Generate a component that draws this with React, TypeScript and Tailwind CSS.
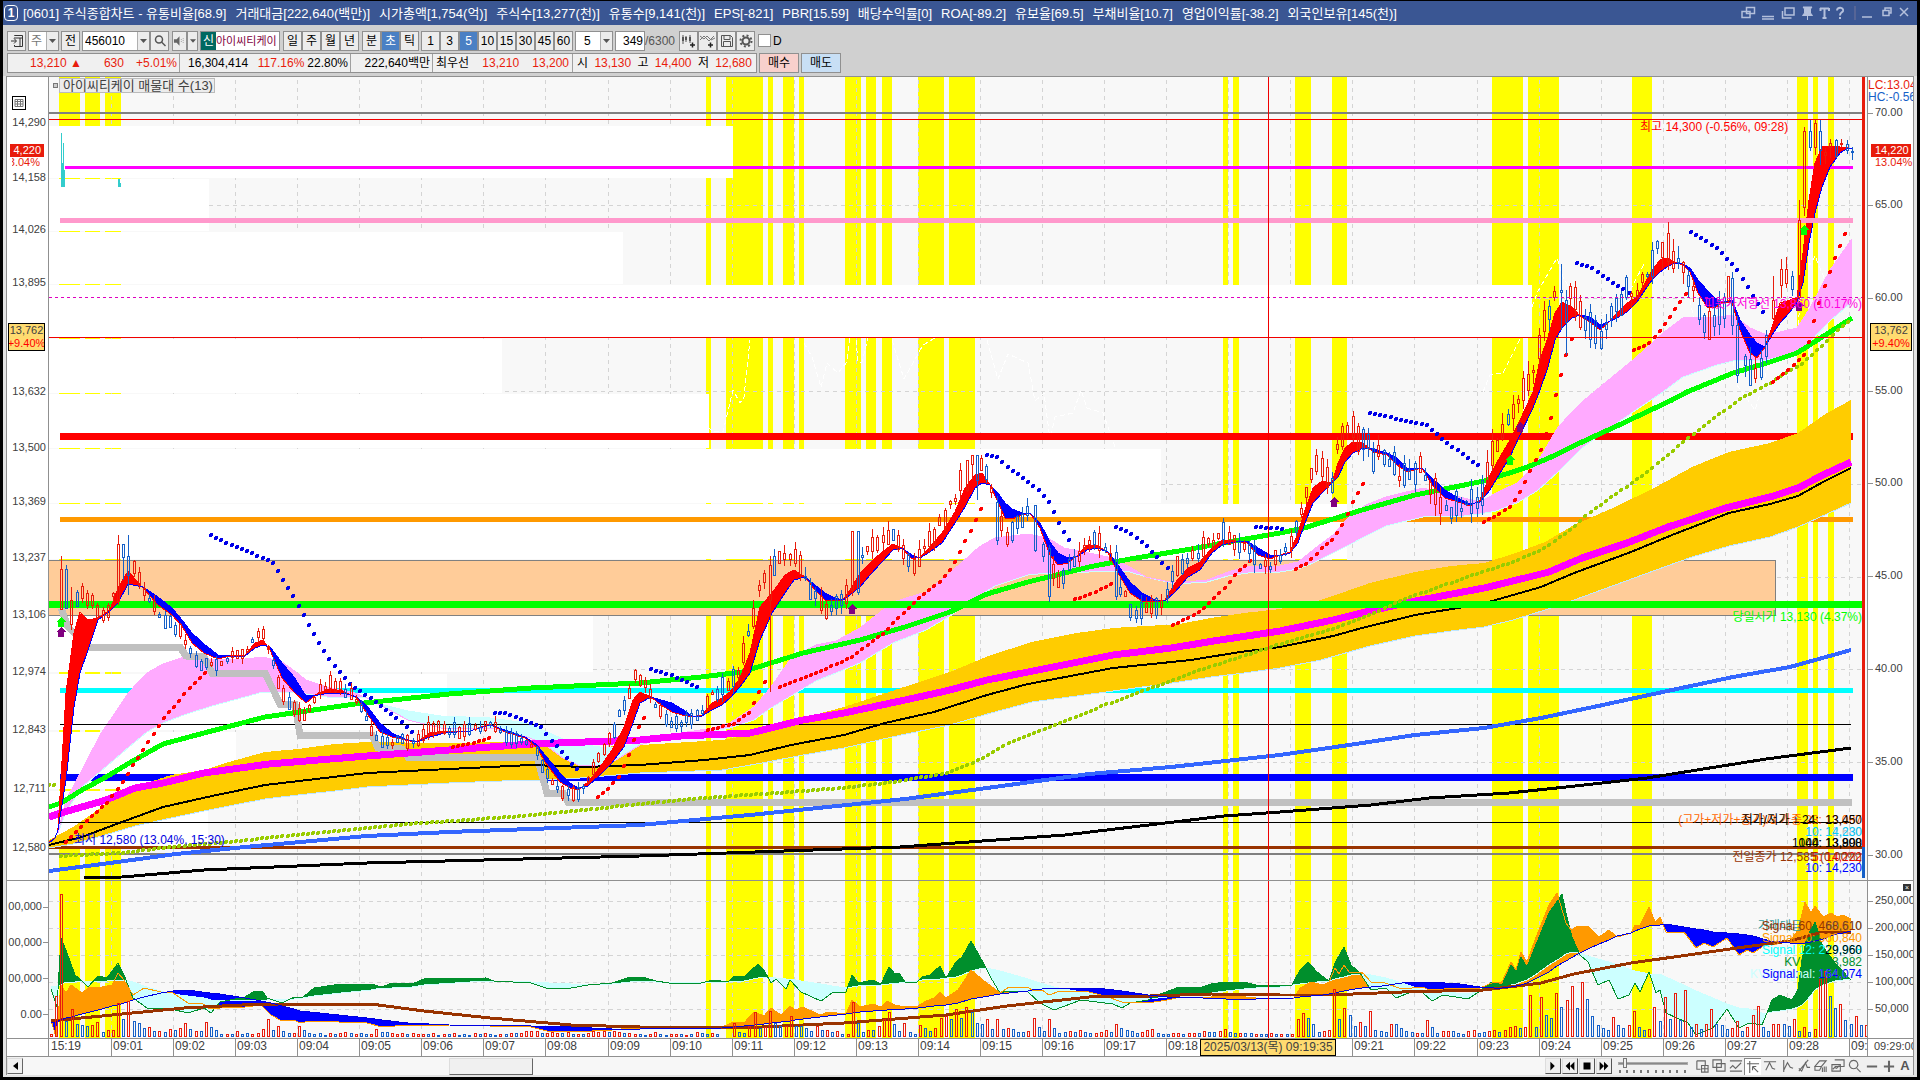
import type { ReactNode } from "react";

const UP = "#e81c0c";
const DOWN = "#1560c8";

// plot coordinates: x 49..1867, main pane y 77..880, volume pane y 881..1038
const LEFT = 49;
const WIDTH = 1818;
const MAIN = { top: 77, height: 803 };
const SUB = { top: 881, height: 157 };

const leftPct = (x: number) => `${((x - LEFT) / WIDTH) * 100}%`;
const topPct = (y: number, pane: { top: number; height: number }) => `${((y - pane.top) / pane.height) * 100}%`;

const titleItems = [
  "[0601] 주식종합차트 - 유통비율[68.9]", "거래대금[222,640(백만)]", "시가총액[1,754(억)]", "주식수[13,277(천)]",
  "유통수[9,141(천)]", "EPS[-821]", "PBR[15.59]", "배당수익률[0]", "ROA[-89.2]", "유보율[69.5]", "부채비율[10.7]",
  "영업이익률[-38.2]", "외국인보유[145(천)]",
];

const bands = [
  [59, 80], [85, 100], [105, 121], [706, 711], [726, 763], [768, 773], [783, 794], [799, 804], [845, 861], [866, 876],
  [882, 892], [918, 944], [949, 975], [1223, 1228], [1233, 1239], [1295, 1311], [1332, 1347], [1492, 1523],
  [1528, 1559], [1632, 1652], [1797, 1808], [1813, 1818], [1828, 1834],
];

// volume profile: top, bottom, right edge
const profile = [
  [126, 178, 733], [179, 231, 209], [232, 284, 623], [285, 337, 1532], [339, 393, 502], [394, 448, 709],
  [449, 503, 1161], [504, 559, 1347], [616, 672, 593], [674, 730, 447], [732, 789, 236], [791, 847, 208],
];

const minuteLines = Array.from({ length: 29 }, (_, i) => Math.round(111 + i * 62.07));

// x, fast average, slow average
const maRibbon = [
  49, 842, 843, 55, 838, 838, 58, 830, 830, 66, 693, 780, 74, 633, 707, 80, 612, 673, 88, 620, 650, 98, 618, 620, 110, 610, 611, 118, 588, 603,
  128, 571, 584, 143, 588, 587, 158, 605, 597, 172, 615, 608, 182, 626, 620, 192, 643, 633, 204, 653, 644, 218, 659, 655,
  230, 656, 656, 245, 655, 656, 255, 643, 648, 263, 640, 645, 270, 650, 647, 282, 678, 663, 294, 692, 677, 306, 703, 696,
  318, 693, 695, 330, 689, 693, 343, 691, 693, 357, 698, 697, 368, 715, 707, 380, 732, 723, 392, 737, 733, 405, 740, 739,
  416, 742, 742, 430, 733, 737, 445, 731, 733, 470, 731, 731, 490, 724, 725, 505, 732, 730, 525, 738, 737, 537, 747, 745,
  545, 762, 755, 560, 782, 773, 570, 788, 783, 578, 790, 788, 588, 782, 786, 600, 767, 775, 612, 750, 763, 624, 727, 747,
  633, 700, 723, 640, 692, 703, 651, 697, 697, 661, 705, 700, 672, 712, 703, 682, 715, 709, 692, 717, 716, 702, 715, 716,
  712, 703, 710, 722, 698, 705, 730, 692, 698, 740, 678, 687, 750, 653, 673, 760, 607, 640, 772, 593, 613, 785, 575, 593,
  794, 570, 580, 805, 577, 577, 815, 590, 585, 825, 600, 593, 835, 601, 598, 843, 600, 600, 850, 590, 595, 860, 573, 587,
  870, 563, 575, 882, 552, 562, 893, 544, 550, 902, 548, 548, 912, 559, 555, 920, 557, 558, 930, 547, 552, 942, 533, 543,
  955, 512, 523, 965, 488, 507, 975, 475, 488, 982, 473, 483, 990, 485, 485, 998, 502, 493, 1005, 518, 503, 1012, 519, 509,
  1022, 515, 513, 1030, 513, 513, 1040, 528, 523, 1050, 555, 542, 1058, 565, 553, 1068, 563, 558, 1078, 555, 556,
  1087, 545, 550, 1097, 545, 548, 1108, 553, 552, 1118, 573, 565, 1130, 593, 582, 1142, 601, 593, 1155, 602, 600,
  1165, 600, 601, 1175, 583, 592, 1188, 568, 577, 1200, 562, 570, 1212, 548, 553, 1222, 540, 545, 1235, 541, 542,
  1247, 543, 541, 1258, 555, 548, 1270, 559, 555, 1280, 555, 556, 1290, 552, 553, 1298, 533, 543, 1305, 510, 523,
  1313, 488, 503, 1322, 481, 493, 1332, 483, 483, 1338, 463, 477, 1345, 448, 462, 1353, 442, 453, 1363, 443, 448,
  1373, 452, 449, 1387, 455, 453, 1397, 465, 458, 1407, 472, 468, 1422, 468, 468, 1432, 485, 478, 1445, 498, 490,
  1458, 502, 498, 1470, 506, 504, 1480, 500, 502, 1490, 475, 490, 1500, 457, 473, 1510, 440, 457, 1520, 420, 435,
  1533, 392, 408, 1540, 360, 390, 1548, 337, 367, 1555, 313, 340, 1562, 302, 328, 1572, 307, 318, 1580, 316, 315,
  1590, 322, 317, 1600, 330, 325, 1608, 323, 322, 1617, 313, 318, 1627, 303, 312, 1637, 297, 302, 1645, 283, 290,
  1652, 270, 280, 1660, 260, 272, 1667, 258, 267, 1675, 262, 263, 1683, 265, 264, 1690, 272, 268, 1698, 293, 280,
  1707, 307, 290, 1715, 308, 298, 1723, 302, 302, 1732, 302, 300, 1740, 330, 320, 1750, 353, 335, 1757, 358, 343,
  1765, 347, 347, 1772, 327, 335, 1780, 303, 323, 1790, 300, 312, 1797, 297, 302, 1803, 253, 283, 1809, 200, 243,
  1815, 163, 213, 1822, 147, 187, 1830, 146, 167, 1840, 147, 153, 1848, 148, 148, 1852, 149, 148,
];

const pinkCloud = [
  58, 833, 833, 66, 800, 812, 82, 770, 787, 100, 735, 772, 129, 692, 747, 147, 673, 732, 163, 664, 723, 184, 657, 715,
  212, 660, 706, 245, 659, 697, 263, 657, 692, 282, 662, 692, 296, 672, 692, 306, 680, 694, 327, 687, 697, 355, 693, 697,
  367, 698, 698, 384, 707, 705, 408, 720, 711, 441, 728, 716, 490, 728, 718, 527, 737, 723, 543, 743, 730, 563, 758, 739,
  580, 766, 744, 600, 765, 747, 616, 760, 747, 640, 745, 744, 681, 733, 735, 713, 728, 731, 730, 723, 728, 754, 707, 720,
  771, 687, 708, 791, 658, 696, 816, 645, 681, 836, 641, 673, 860, 628, 663, 893, 602, 643, 926, 592, 630, 950, 573, 616,
  979, 547, 596, 995, 538, 586, 1028, 534, 575, 1048, 538, 573, 1064, 548, 573, 1089, 553, 572, 1113, 558, 571,
  1130, 567, 572, 1146, 577, 577, 1175, 583, 584, 1207, 580, 582, 1228, 572, 576, 1248, 566, 573, 1280, 566, 572,
  1298, 562, 569, 1313, 550, 563, 1333, 535, 553, 1349, 517, 545, 1366, 505, 536, 1386, 497, 526, 1423, 488, 517,
  1443, 493, 516, 1464, 498, 516, 1480, 502, 514, 1496, 493, 511, 1517, 483, 503, 1537, 463, 491, 1558, 427, 472,
  1582, 402, 448, 1600, 387, 435, 1633, 360, 412, 1663, 333, 392, 1683, 318, 377, 1717, 317, 365, 1733, 315, 361,
  1750, 328, 360, 1767, 335, 360, 1797, 328, 353, 1810, 308, 342, 1830, 270, 321, 1852, 239, 302,
];

const goldCloud = [
  49, 840, 848, 73, 827, 844, 102, 807, 836, 135, 787, 826, 171, 775, 818, 204, 770, 811, 229, 762, 806, 265, 752, 799,
  298, 749, 795, 335, 744, 791, 367, 742, 787, 449, 743, 783, 502, 742, 781, 543, 743, 780, 580, 748, 778, 640, 745, 773,
  722, 740, 770, 762, 733, 763, 803, 718, 755, 844, 707, 748, 901, 688, 735, 950, 672, 725, 991, 655, 713, 1032, 642, 702,
  1077, 633, 696, 1113, 628, 691, 1179, 624, 682, 1211, 618, 677, 1244, 613, 673, 1280, 609, 668, 1321, 600, 660,
  1370, 583, 646, 1415, 572, 636, 1451, 566, 631, 1484, 563, 627, 1513, 554, 620, 1545, 542, 610, 1574, 525, 600,
  1615, 507, 585, 1656, 487, 570, 1692, 467, 557, 1729, 452, 546, 1770, 443, 537, 1798, 433, 527, 1827, 413, 514,
  1851, 400, 503,
];

const curves = [
  { color: "#000", width: 2, pts: "49,845 82,837 122,822 163,807 212,796 265,785 367,773 449,769 531,765 584,767 640,765 705,760 750,755 791,745 844,735 885,723 934,712 987,695 1028,684 1113,668 1191,660 1240,652 1280,647 1333,636 1362,628 1415,615 1464,607 1492,601 1541,587 1574,573 1631,552 1672,535 1729,513 1770,504 1798,496 1823,482 1851,468" },
  { color: "#3366ff", width: 4, pts: "49,871 110,863 176,854 245,847 367,836 449,832 640,825 750,815 905,799 987,788 1089,774 1171,767 1280,755 1349,745 1415,735 1484,728 1541,718 1598,706 1672,690 1733,677 1790,667 1851,650" },
  { color: "#000", width: 3, pts: "84,878 122,877 204,870 367,863 640,856 900,847 1065,835 1224,816 1280,812 1371,805 1429,798 1509,793 1566,787 1647,778 1766,759 1851,748" },
  { color: "#ff00ff", width: 7, pts: "49,817 61,813 106,800 135,788 163,783 204,773 269,764 367,756 449,750 531,744 640,740 681,736 750,733 803,720 844,713 905,700 946,691 987,680 1028,672 1113,655 1171,648 1220,640 1280,631 1333,620 1370,611 1415,601 1484,588 1525,578 1549,572 1582,558 1627,543 1668,527 1729,507 1770,497 1798,488 1823,475 1851,462" },
  { color: "#00ff00", width: 5, pts: "49,807 61,803 82,790 106,777 131,762 163,744 204,733 265,717 355,704 449,694 531,688 640,683 701,677 742,672 803,653 860,640 905,627 950,612 987,594 1028,582 1089,567 1130,559 1191,549 1228,542 1280,533 1304,528 1362,510 1415,495 1484,481 1525,468 1549,458 1582,442 1619,425 1672,400 1687,392 1733,373 1767,363 1797,353 1830,332 1852,318" },
];

const silver = "61,608 68,627 88,647 180,647 186,656 204,657 212,673 265,673 280,704 295,704 300,735 372,735 378,748 402,749 408,757 537,757 547,793 563,793 568,802 1852,802";

const dotRuns = [
  { color: "#99cc00", runs: ["49,785 57,785", "61,856 122,853 171,847 229,842 294,835 408,824 510,817 612,807 689,799 762,794 803,791 852,787 901,781 946,773 975,762 1007,744 1052,726 1105,705 1154,687 1191,673 1228,661 1280,644 1333,629 1370,615 1402,600 1439,587 1476,574 1513,562 1545,548 1574,527 1590,512 1619,492 1647,472 1676,448 1709,422 1740,399 1770,383 1800,365 1820,348 1840,328 1851,320"] },
  { color: "#0000e8", runs: ["211,535 227,543 268,560 273,563 283,580 294,597 304,616 320,645 335,667 350,684 366,695 382,707 402,722 413,733", "495,713 506,713 541,727 552,741 567,758 578,770", "651,669 671,675 697,687", "987,455 997,457 1008,467 1028,482 1039,490 1049,502 1059,523 1070,541", "1116,527 1127,531 1147,546 1168,569", "1256,527 1285,529", "1370,413 1398,419 1427,425 1443,440 1464,455 1479,466", "1577,263 1592,268 1613,283 1629,293", "1691,232 1706,241 1717,248 1737,269 1748,288 1763,312"] },
  { color: "#ff0000", runs: ["66,842 92,816 107,803 122,783 133,765 144,749 154,733 164,718 180,700 190,687 206,672", "453,747 473,743 490,738", "598,797 609,788 620,775 630,752 635,737 640,725 646,715", "708,730 734,724 750,712 759,693 765,681", "780,687 803,678 828,668 852,657 869,644 885,632 899,617 920,597 940,582 952,568 961,550 971,530 977,517 982,507", "1075,599 1089,595 1111,584", "1173,625 1189,618 1203,609 1215,597 1225,588 1235,575 1250,561", "1296,569 1308,563 1323,547 1334,538 1344,522 1354,499 1365,481", "1484,522 1499,514 1510,507 1520,492 1530,472 1541,449 1551,418 1556,395 1561,376 1566,356 1572,338", "1634,350 1649,344 1665,324 1685,295", "1773,382 1789,370 1804,355 1810,339 1815,318 1825,284 1836,255 1846,232"] },
];

const whiteLines = [
  "708,427 712,431 723,432 733,390 740,403 744,397 750,340", "804,343 812,357 821,387 827,363 838,373 847,362 850,338",
  "856,340 858,362 862,362 868,338", "892,340 904,379 923,345 935,338",
  "987,340 998,379 1008,354 1028,363 1035,401 1044,393 1050,440 1055,417 1073,413 1081,390 1087,408 1103,413 1115,447",
  "1483,392 1490,375 1503,373 1523,333 1537,293 1557,258 1563,277 1572,292 1590,318 1617,310 1633,285 1645,262",
  "1690,300 1697,335 1706,325 1712,345 1722,318 1730,340 1737,385 1755,410 1767,370 1775,350 1797,345 1803,255 1810,265 1815,256 1827,285 1840,277 1850,286",
];

// x, high, low, body top, body bottom, 1 = rising
const tallCandles = [
  [61, 556, 609, 569, 609, 1], [66, 565, 609, 569, 608, 0], [71, 587, 630, 600, 624, 1], [118, 535, 605, 544, 601, 1],
  [123, 544, 580, 544, 557, 0], [128, 535, 595, 556, 575, 0], [770, 556, 692, 565, 600, 1], [852, 531, 596, 531, 590, 1],
  [858, 531, 595, 531, 592, 0], [967, 460, 492, 460, 490, 1], [972, 455, 480, 455, 464, 1], [977, 455, 500, 455, 480, 0],
  [997, 496, 545, 502, 540, 0], [1035, 505, 552, 505, 550, 0], [1049, 545, 602, 548, 596, 0], [1116, 545, 600, 552, 596, 0],
  [1561, 264, 330, 290, 292, 0], [1566, 290, 355, 300, 322, 0], [1728, 276, 302, 276, 300, 1], [1732, 272, 335, 278, 325, 0],
  [1737, 316, 383, 325, 375, 0], [1773, 276, 320, 300, 318, 1], [1799, 200, 300, 220, 297, 1], [1804, 127, 216, 131, 207, 1],
  [1810, 120, 151, 131, 147, 0], [1815, 120, 155, 123, 147, 1], [1820, 120, 165, 131, 150, 0], [1825, 148, 164, 152, 155, 1],
  [1830, 139, 158, 143, 147, 1], [1836, 139, 158, 140, 156, 0], [1841, 139, 148, 143, 144, 1], [1847, 140, 154, 144, 150, 0],
  [1852, 147, 160, 151, 152, 0],
];

// x, oscillator, signal
const kvo = [
  51, 989, 986, 57, 1007, 986, 61, 938, 985, 66, 950, 982, 75, 975, 982, 82, 981, 981, 88, 987, 981, 98, 976, 981,
  107, 978, 981, 118, 963, 980, 124, 975, 980, 133, 998, 982, 147, 1008, 987, 171, 1009, 994, 188, 1013, 996,
  204, 1008, 998, 211, 1013, 1000, 220, 1002, 1001, 245, 997, 1000, 255, 991, 1000, 263, 992, 1000, 267, 998, 1000,
  282, 1003, 999, 294, 997, 999, 302, 998, 998, 314, 988, 996, 341, 984, 993, 371, 984, 990, 382, 987, 988, 392, 983, 988,
  412, 984, 987, 424, 979, 985, 486, 978, 981, 494, 981, 981, 531, 983, 982, 549, 989, 983, 571, 988, 984, 588, 985, 985,
  612, 983, 984, 630, 977, 982, 646, 978, 981, 656, 981, 982, 669, 983, 982, 701, 983, 982, 713, 980, 982, 728, 982, 982,
  734, 976, 981, 744, 977, 981, 758, 964, 978, 764, 970, 977, 771, 983, 977, 776, 979, 978, 786, 989, 979, 790, 980, 979,
  801, 992, 981, 821, 1001, 984, 832, 993, 986, 846, 992, 988, 852, 975, 987, 858, 983, 986, 873, 980, 985, 881, 984, 985,
  889, 967, 984, 895, 974, 983, 899, 973, 983, 905, 982, 982, 916, 983, 981, 922, 977, 980, 930, 975, 979, 940, 966, 979,
  946, 978, 978, 956, 962, 977, 962, 957, 975, 971, 941, 971, 979, 955, 969, 986, 968, 968, 991, 978, 969, 1000, 993, 971,
  1007, 991, 973, 1028, 992, 979, 1040, 1003, 983, 1054, 1010, 987, 1081, 1000, 992, 1113, 1004, 997, 1122, 1008, 998,
  1130, 1003, 998, 1148, 1000, 999, 1158, 995, 998, 1179, 987, 996, 1199, 988, 994, 1211, 984, 993, 1226, 982, 991,
  1244, 982, 989, 1256, 985, 988, 1280, 985, 987, 1292, 985, 985, 1300, 970, 984, 1308, 962, 983, 1317, 972, 982,
  1329, 981, 981, 1335, 963, 979, 1344, 947, 977, 1351, 965, 975, 1360, 973, 974, 1371, 990, 975, 1386, 988, 978,
  1396, 998, 981, 1411, 992, 986, 1423, 993, 990, 1432, 1001, 991, 1443, 995, 992, 1468, 999, 994, 1480, 991, 991,
  1492, 982, 988, 1502, 985, 988, 1511, 965, 985, 1516, 970, 984, 1521, 957, 982, 1527, 967, 980, 1535, 947, 975,
  1549, 913, 965, 1562, 894, 957, 1566, 913, 954, 1572, 937, 952, 1580, 955, 953, 1588, 962, 956, 1598, 985, 959,
  1609, 980, 962, 1618, 999, 965, 1629, 995, 969, 1635, 983, 971, 1640, 992, 972, 1649, 972, 974, 1656, 993, 974,
  1660, 990, 974, 1666, 1013, 977, 1688, 1023, 987, 1696, 1035, 991, 1713, 1028, 998, 1727, 1009, 1004, 1739, 1028, 1008,
  1749, 1023, 1009, 1762, 1025, 1013, 1767, 1013, 1013, 1772, 1000, 1012, 1780, 995, 1011, 1792, 1000, 1009,
  1798, 990, 1007, 1802, 960, 1005, 1807, 937, 1000, 1815, 922, 990, 1823, 947, 985, 1835, 963, 981, 1851, 980, 979,
];

const trend = [
  51, 1020, 1022, 56, 1037, 1022, 61, 985, 1020, 66, 993, 1018, 71, 985, 1017, 82, 993, 1014, 90, 987, 1012, 102, 987, 1009,
  112, 985, 1006, 118, 973, 1005, 124, 980, 1003, 133, 995, 1000, 144, 988, 997, 161, 992, 993, 173, 993, 991,
  188, 1003, 990, 202, 1003, 992, 210, 1009, 993, 220, 1008, 994, 245, 1007, 998, 261, 1005, 1001, 271, 1015, 1003,
  282, 1021, 1006, 294, 1020, 1009, 300, 1023, 1011, 310, 1021, 1012, 367, 1023, 1018, 382, 1027, 1020, 408, 1025, 1023,
  449, 1025, 1025, 531, 1027, 1026, 547, 1031, 1026, 571, 1032, 1027, 592, 1031, 1028, 612, 1030, 1029, 640, 1027, 1029,
  722, 1027, 1028, 734, 1022, 1027, 744, 1023, 1026, 754, 1012, 1025, 764, 1016, 1024, 771, 1008, 1023, 781, 1015, 1022,
  790, 1006, 1021, 795, 1010, 1020, 803, 1007, 1019, 820, 1015, 1017, 828, 1012, 1016, 846, 1014, 1014, 852, 1000, 1013,
  860, 1007, 1012, 873, 1004, 1011, 881, 1007, 1010, 887, 1001, 1010, 895, 1005, 1009, 905, 1007, 1009, 918, 1006, 1008,
  926, 1001, 1007, 934, 998, 1006, 940, 992, 1005, 946, 998, 1005, 958, 990, 1003, 971, 970, 999, 983, 980, 997,
  1000, 993, 994, 1009, 987, 993, 1028, 987, 991, 1032, 990, 990, 1042, 990, 989, 1049, 995, 988, 1060, 991, 988,
  1085, 991, 988, 1105, 996, 989, 1122, 1002, 991, 1148, 1003, 995, 1167, 1000, 997, 1181, 997, 997, 1203, 998, 998,
  1226, 995, 999, 1256, 998, 999, 1294, 998, 998, 1300, 988, 997, 1311, 982, 996, 1323, 985, 995, 1329, 982, 994,
  1335, 968, 993, 1339, 974, 992, 1344, 965, 991, 1349, 972, 990, 1362, 972, 988, 1371, 982, 987, 1382, 982, 986,
  1402, 989, 983, 1423, 987, 982, 1429, 990, 982, 1460, 988, 984, 1480, 988, 987, 1494, 982, 988, 1502, 982, 988,
  1511, 962, 987, 1516, 970, 986, 1521, 952, 985, 1527, 962, 983, 1535, 940, 979, 1549, 905, 972, 1557, 893, 966,
  1566, 923, 961, 1571, 930, 958, 1578, 926, 954, 1588, 926, 949, 1599, 937, 944, 1609, 930, 940, 1617, 937, 936,
  1631, 933, 933, 1635, 925, 931, 1640, 925, 929, 1649, 907, 926, 1655, 922, 925, 1660, 917, 925, 1666, 932, 924,
  1684, 932, 927, 1696, 948, 929, 1704, 943, 930, 1713, 947, 932, 1727, 938, 933, 1739, 955, 934, 1747, 950, 935,
  1753, 953, 936, 1770, 942, 941, 1790, 941, 943, 1798, 930, 943, 1805, 902, 943, 1811, 913, 942, 1815, 906, 941,
  1823, 917, 939, 1831, 913, 936, 1837, 917, 934, 1843, 915, 933, 1851, 919, 931,
];

const brownAverage = "51,1021 122,1014 184,1008 261,1004 371,1004 424,1011 490,1018 571,1025 640,1027 762,1027 844,1023 946,1015 1007,1006 1089,997 1150,996 1211,994 1280,995 1329,995 1402,992 1484,990 1541,983 1574,974 1631,963 1688,955 1737,948 1790,941 1819,933 1851,932";

// first bar x, then bar heights (negative = falling)
const volumeRuns: [number, number[]][] = [
  [51, [2, 40, 142, -15, 27, -12, -11, -10, 11, 14, -4, 6, 6, 33, -17, 35, -15, -13, -8, 9, -5, 5, -4, 7, -6, 8, 13, -7, 5, -5, 14, -9, -6, -2, 2, -2, 5, -2, -3, 2, 3, 7, 17, -6, 10, -5, -3, 3, 10, -6, -3, -2, -3, -1, 3, -2, 3, 4, -3, 2, -3, -2, 2, 7, -4, -4, 3, 2, 3, -2, 3, 2, 2, -2, 3, -1, 2, -2, 3, -1, -2, -1, 3, -2, 3, -2, -1, 2, -2, 3, -3, 3, 5, 5, 5, -3, 3, 4, 3, -3, 4, -2, 2, -2, 3, 5, 4, 5, -4, 5, 4, -3, 3, 2, -2, -1, 2, 4, -2, -1, 2, 2, -2, 1, -2, 4, -3, -2, 3, -2]],
  [734, [13, -4, -3, 10, 24, -8, 9, 25, -13, -10, 10, 20, -10, -10, -8, -5, 10, -6, 6, -4, 5, -2, 2, 34, -13, -4, 6, -6, 10, 17, 24, -12, -5, 13, -4, -2, 11, -8, -5, 8, 18, 20, -17, 27, -18, 29, -24, -13, -12, 17, -7, 17, -7, 8, -7, -4, -4, 5, 18, -9, -5, 17, -8, -3, -4, 5, -4, 6, -4, -3, 3, 4, 6, -4, 12, -8, -6, -5, -3, 4, 6, 7, -3, -2, -2, 3, 3, -2, 3, 3, -3, 5, -4, -4, 5, 7, -4, -3, 3, -3, -3, 2, -2, -2, 3, -2, 2, -2, 2]],
  [1298, [17, 23, -18, -12, -4, 5, 6, 47, -17, 28, -21, -10, 14, -10, 25, -6, -5, -4, 12, -12, -8, -5, -4, 3, -3, 16, -9, -3, 5, 5, -5, -3, -2, 5, 6, -3, -4, 5, 6, -4, 6, 9, 10, -8, 9, 41, -9, 39, -21, -18, 43, -29, 36, 50, -28, 54, -37, -20, -11, -8, -6, 19, -11, -8, 11, 25, -9, -6, 7, 29, -15, 39, -17, 43, -16, 46, -9, 12, -7, 12, 27, -12, -11, -7, 8, 15, -5, 9, 21, 30, -9, -5, 12, 12, -12, -10, 17, -5, 9, -4, 7, 57, 65, -40, -28, 32, -16, -12, 20, -11, 11, 11]],
];

const sample = (d: number[], x: number) => {
  let i = 0;
  while (i < d.length - 6 && d[i + 3] < x) i += 3;
  const t = Math.max(0, Math.min(1, (x - d[i]) / (d[i + 3] - d[i])));
  return [d[i + 1] + (d[i + 4] - d[i + 1]) * t, d[i + 2] + (d[i + 5] - d[i + 2]) * t];
};

const dotsOf = (run: string) => {
  const p = run.split(" ").map((s) => s.split(",").map(Number));
  const out: number[][] = [];
  let i = 0;
  for (let x = p[0][0]; x <= p[p.length - 1][0] + 1; x += 5.15) {
    while (i < p.length - 2 && p[i + 1][0] < x) i++;
    const t = (x - p[i][0]) / (p[i + 1][0] - p[i][0]);
    out.push([x, p[i][1] + (p[i + 1][1] - p[i][1]) * t]);
  }
  return out;
};

const noise = (n: number) => {
  const v = Math.sin(n * 127.1 + 11.7) * 43758.5453;
  return v - Math.floor(v);
};

const candles = (() => {
  const out = [...tallCandles];
  for (let i = 2; i < 349; i++) {
    const x = Math.round(51 + i * 5.165);
    if (tallCandles.some((c) => Math.abs(c[0] - x) < 4)) continue;
    const [fast, slow] = sample(maRibbon, x);
    const lead = Math.max(-22, Math.min(18, (fast - slow) * 1.3));
    const range = x > 1350 ? 13 : x > 720 ? 9 : 6;
    const mid = fast + lead + (noise(i) - 0.5) * range;
    const body = 1 + noise(i + 500) * range;
    const rise = noise(i + 90) < (lead < -2 ? 0.75 : lead > 2 ? 0.3 : 0.5) ? 1 : 0;
    out.push([x, mid - body - noise(i + 31) * range, mid + body + noise(i + 77) * range, mid - body, mid + body, rise]);
  }
  return out;
})();

function Ribbon({ data, above, below }: { data: number[]; above: string; below: string }) {
  let a = "";
  let b = "";
  const end = data[data.length - 3];
  for (let x = data[0]; x < end; x += 2) {
    const [p, q] = sample(data, x);
    const [r, s] = sample(data, x + 2);
    const quad = `M${x} ${p.toFixed(1)}L${x + 2} ${r.toFixed(1)}V${s.toFixed(1)}L${x} ${q.toFixed(1)}Z`;
    if (p + r < q + s) a += quad;
    else b += quad;
  }
  return (
    <>
      <path d={a} fill={above} />
      <path d={b} fill={below} />
    </>
  );
}

const lineOf = (d: number[], k: number) => {
  const out: string[] = [];
  for (let i = 0; i < d.length; i += 3) out.push(`${d[i]},${d[i + k]}`);
  return out.join(" ");
};

function Arrow({ x, y, color }: { x: number; y: number; color: string }) {
  return <path d={`M${x} ${y - 5}l5 5h-2v5h-6v-5h-2z`} fill={color} />;
}

function Grid({ rows, top, bottom }: { rows: number[]; top: number; bottom: number }) {
  return (
    <g stroke="#d4d4d4" strokeDasharray="4 4" fill="none">
      {minuteLines.map((x) => <path key={x} d={`M${x + 0.5} ${top}V${bottom}`} />)}
      {rows.map((y) => <path key={y} d={`M49 ${y + 0.5}H1862`} />)}
    </g>
  );
}

function HLine({ y, w, color, from = 60, to = 1853 }: { y: number; w: number; color: string; from?: number; to?: number }) {
  return <rect x={from} y={y - Math.floor(w / 2)} width={to - from} height={w} fill={color} />;
}

function MainChart() {
  return (
    <svg className="absolute inset-0 h-full w-full" viewBox="49 77 1818 803" preserveAspectRatio="none" shapeRendering="crispEdges" fill="none">
      {bands.map(([a, b]) => <rect key={a} x={a} y={77} width={b - a} height={803} fill="#ffff00" />)}
      <Grid rows={[205, 298, 391, 484, 577, 669, 762]} top={80} bottom={880} />
      {profile.map(([t, b, r]) => <rect key={t} x={49} y={t} width={r - 49} height={b - t} fill="#fff" />)}
      <rect x={49} y={560} width={1726} height={55} fill="#ffcc99" />
      <path d="M49 560.5H1775.5V615.5H49" stroke="#808080" />
      {whiteLines.map((p) => <polyline key={p} points={p} stroke="#fff" strokeDasharray="5 3" />)}
      <path d="M61 187V133h1v30h1v-20h1v27h1v17h2zM118 187v-8h2v4h1v4z" fill="#33cccc" />
      <HLine y={113} w={2} color="#808080" from={49} to={1862} />
      <HLine y={119} w={1} color="#f00000" from={49} to={1862} />
      <HLine y={436} w={7} color="#ff0000" />
      <HLine y={167} w={3} color="#ff00ff" from={65} />
      <HLine y={519} w={5} color="#ff9900" />
      <HLine y={690} w={5} color="#00ffff" />
      <HLine y={777} w={7} color="#0000ff" />
      <HLine y={847} w={3} color="#993300" from={49} to={1862} />
      <Ribbon data={goldCloud} above="#ffcc00" below="#ffcc00" />
      <Ribbon data={pinkCloud} above="#ffaaff" below="#ccffff" />
      <polyline points={lineOf(goldCloud, 2)} stroke="#bfe6ff" />
      <polyline points={lineOf(pinkCloud, 2)} stroke="#ccffff" />
      <polyline points={lineOf(pinkCloud, 1)} stroke="#ffaaff" />
      <HLine y={724} w={1} color="#000" to={1851} />
      <HLine y={822} w={1} color="#000" to={1851} />
      <HLine y={854} w={2} color="#808080" from={49} to={1862} />
      <polyline points={silver} stroke="#c0c0c0" strokeWidth={7} />
      {curves.map((c) => <polyline key={c.pts} points={c.pts} stroke={c.color} strokeWidth={c.width} />)}
      <HLine y={604} w={7} color="#00ff00" from={49} to={1862} />
      {dotRuns.map((g) => g.runs.map((run) => dotsOf(run).map(([x, y]) => (
        <circle key={`${x}-${y}`} cx={Math.round(x)} cy={Math.round(y)} r={2} fill={g.color} />
      ))))}
      <Ribbon data={maRibbon} above="#ff0000" below="#0000ff" />
      <polyline points={lineOf(maRibbon, 1)} stroke="#ff0000" />
      <polyline points={lineOf(maRibbon, 2)} stroke="#0000ff" />
      <HLine y={220} w={5} color="#ff99cc" />
      {candles.map(([x, hi, lo, t, b, rise]) => (
        <path
          key={x}
          d={`M${x + 0.5} ${Math.round(hi)}V${Math.round(t)}M${x + 0.5} ${Math.round(b)}V${Math.round(lo)}M${x - 0.5} ${Math.round(t) + 0.5}h2V${Math.round(b) + 0.5}h-2z`}
          stroke={rise ? UP : DOWN}
        />
      ))}
      <Arrow x={61} y={622} color="#00ff00" />
      <Arrow x={61} y={632} color="#800080" />
      <Arrow x={852} y={609} color="#800080" />
      <Arrow x={1334} y={502} color="#800080" />
      <Arrow x={1520} y={427} color="#800080" />
      <Arrow x={1510} y={460} color="#00ff00" />
      <Arrow x={1804} y={230} color="#00ff00" />
      <Arrow x={1799} y={306} color="#800080" />
      <path d="M49 297.5H1862" stroke="#e000c0" strokeDasharray="3 3" />
      <path d="M49 337.5H1862M1268.5 77V880" stroke="#f00000" />
      <rect x={1862} y={77} width={3} height={770} fill={UP} />
      <rect x={1862} y={847} width={3} height={31} fill={DOWN} />
    </svg>
  );
}

function VolumeChart() {
  return (
    <svg className="absolute inset-0 h-full w-full" viewBox="49 881 1818 157" preserveAspectRatio="none" shapeRendering="crispEdges" fill="none">
      {bands.map(([a, b]) => <rect key={a} x={a} y={881} width={b - a} height={157} fill="#ffff00" />)}
      <Grid rows={[901, 928, 955, 982, 1009]} top={881} bottom={1038} />
      <Ribbon data={trend} above="#ff9900" below="#0000ff" />
      <Ribbon data={kvo} above="#008f2c" below="#ccffff" />
      <polyline points={lineOf(kvo, 2)} stroke="#ccffff" />
      <polyline points={lineOf(kvo, 1)} stroke="#008f2c" />
      <polyline points={lineOf(trend, 1)} stroke="#ff9900" />
      <polyline points={brownAverage} stroke="#993300" strokeWidth={3} />
      <polyline points={lineOf(trend, 2)} stroke="#0000e0" />
      {volumeRuns.map(([start, bars]) => bars.map((h, i) => {
        const x = Math.round(start + i * 5.165);
        return <rect key={x} x={x - 0.5} y={1036.5 - Math.abs(h)} width={2} height={Math.abs(h)} stroke={h > 0 ? UP : DOWN} />;
      }))}
      <path d="M1268.5 881V1038" stroke="#f00000" />
    </svg>
  );
}

function Note({ y, pane = MAIN, color, children }: { y: number; pane?: { top: number; height: number }; color: string; children: ReactNode }) {
  return (
    <span className="absolute right-[5px] -translate-y-1/2 whitespace-pre" style={{ top: topPct(y, pane), color }}>
      {children}
    </span>
  );
}

function AxisLabel({ y, pane, side, children }: { y: number; pane: { top: number; height: number }; side: "left" | "right"; children: ReactNode }) {
  return (
    <span className={`absolute -translate-y-1/2 whitespace-nowrap ${side === "left" ? "right-[2px]" : "left-[7px]"}`} style={{ top: topPct(y, pane) }}>
      {children}
    </span>
  );
}

function Tick({ y, pane, side }: { y: number; pane: { top: number; height: number }; side: "left" | "right" }) {
  return <i className={`absolute h-px bg-[#909090] ${side === "left" ? "right-0 w-[5px]" : "left-0 w-[5px]"}`} style={{ top: topPct(y, pane) }} />;
}

function CursorTag({ className }: { className: string }) {
  return (
    <div className={`absolute flex flex-col items-center overflow-hidden border border-black bg-[#ffdb70] leading-[13px] ${className}`} style={{ top: topPct(323, MAIN) }}>
      <span>13,762</span>
      <span className="text-[#ff0000]">+9.40%</span>
    </div>
  );
}

const leftPrices: [string, number][] = [
  ["14,290", 122], ["14,158", 177], ["14,026", 229], ["13,895", 282], ["13,632", 391], ["13,500", 447], ["13,369", 501],
  ["13,237", 557], ["13,106", 614], ["12,974", 671], ["12,843", 729], ["12,711", 788], ["12,580", 847],
];
const rightScale: [string, number][] = [
  ["70.00", 112], ["65.00", 204], ["60.00", 297], ["55.00", 390], ["50.00", 482], ["45.00", 575], ["40.00", 668], ["35.00", 761], ["30.00", 854],
];
const volumeScale: [string, number][] = [["250,000", 900], ["200,000", 927], ["150,000", 954], ["100,000", 981], ["50,000", 1008]];

function ToolButton({ children, active, label, narrow }: { children: ReactNode; active?: boolean; label?: string; narrow?: boolean }) {
  return (
    <button
      aria-label={label}
      className={`flex h-5 shrink-0 items-center justify-center border border-[#909090] ${narrow ? "w-[15px]" : "w-[19px]"} ${active ? "bg-[#4a80c4] text-white" : "bg-[#ececec]"}`}
    >
      {children}
    </button>
  );
}

function Caret() {
  return (
    <span className="pointer-events-none absolute top-px right-px flex h-[18px] w-3 items-center justify-center border-l border-[#b0b0b0] bg-[#ececec]">
      <svg width="7" height="4" viewBox="0 0 7 4"><path d="M0 0h7L3.5 4z" fill="#555" /></svg>
    </span>
  );
}

function Toolbar() {
  return (
    <div className="flex h-[28px] items-center pt-[3px] pl-1 text-[12px]">
      <ToolButton label="패널 열기">
        <svg width="14" height="14" viewBox="0 0 14 14" fill="none" stroke="#333"><path d="M4.500 2V1.500H12.500V12.500H4.500V11M4 4h9M10 4v8" /><path d="M1 7h5M4 4.500L6.500 7 4 9.500" /></svg>
      </ToolButton>
      <div className="relative ml-0.5">
        <select aria-label="종목 구분" className="h-5 w-[31px] appearance-none border border-[#909090] bg-white pl-0.5 text-[#777]"><option>주</option></select>
        <Caret />
      </div>
      <div className="ml-0.5"><ToolButton>전</ToolButton></div>
      <div className="relative ml-0.5">
        <input aria-label="종목 코드" defaultValue="456010" className="h-5 w-[68px] border border-[#909090] bg-white pl-0.5" />
        <Caret />
      </div>
      <ToolButton label="종목 검색">
        <svg width="14" height="14" viewBox="0 0 14 14" fill="none" stroke="#555" strokeWidth="1.500"><circle cx="6" cy="5.500" r="3.500" /><path d="M8.500 8l4 4" /></svg>
      </ToolButton>
      <div className="ml-[3px] flex">
        <ToolButton label="음성" narrow>
          <svg width="13" height="12" viewBox="0 0 14 12"><path d="M1 4h3l3-3v10L4 8H1z" fill="#666" /><path d="M9 4v4M11 3v6" stroke="#999" strokeDasharray="1 1" /></svg>
        </ToolButton>
        <button aria-label="음성 설정" className="flex h-5 w-[11px] items-center justify-center border border-[#909090] bg-[#ececec]">
          <svg width="6" height="4" viewBox="0 0 7 4"><path d="M0 0h7L3.5 4z" fill="#555" /></svg>
        </button>
      </div>
      <div className="ml-[2px] flex h-5 w-[80px] overflow-hidden border border-[#909090] bg-white whitespace-nowrap">
        <span className="w-[15px] shrink-0 bg-[#006860] text-center leading-[18px] text-white">신</span>
        <span className="text-[11px] leading-[18px] text-[#800040]">아이씨티케이</span>
      </div>
      <div className="ml-[3px] flex">
        <ToolButton>일</ToolButton><ToolButton>주</ToolButton><ToolButton>월</ToolButton><ToolButton>년</ToolButton>
      </div>
      <div className="ml-[3px] flex">
        <ToolButton>분</ToolButton><ToolButton active>초</ToolButton><ToolButton>틱</ToolButton>
      </div>
      <div className="ml-0.5 flex">
        <ToolButton>1</ToolButton><ToolButton>3</ToolButton><ToolButton active>5</ToolButton><ToolButton>10</ToolButton>
        <ToolButton>15</ToolButton><ToolButton>30</ToolButton><ToolButton>45</ToolButton><ToolButton>60</ToolButton>
      </div>
      <div className="relative ml-0.5">
        <select aria-label="간격" className="h-5 w-[38px] appearance-none border border-[#909090] bg-white pl-2"><option>5</option></select>
        <Caret />
      </div>
      <input aria-label="봉 개수" defaultValue="349" className="ml-0.5 h-5 w-[30px] border border-[#909090] bg-white pr-px text-right" />
      <span className="w-[34px] text-[#555]">/6300</span>
      <ToolButton label="봉 추가">
        <svg width="15" height="14" viewBox="0 0 15 14"><path d="M2 1v9M5 2v6M9 1v8" stroke="#555" /><path d="M1 3h2v4H1zM4 3h2v3H4zM8 3h2v4H8z" fill="#555" /><path d="M9 11h5M11.500 8.500v5" stroke="#222" strokeWidth="1.500" /></svg>
      </ToolButton>
      <ToolButton label="지표 추가">
        <svg width="15" height="14" viewBox="0 0 15 14" fill="none" stroke="#777"><path d="M0 6l4-4 5 5 5-5M0 2l4 3 3-3 4 4 4-2" /><path d="M8 11h5M10.500 8.500v5" stroke="#222" strokeWidth="1.500" /></svg>
      </ToolButton>
      <ToolButton label="저장">
        <svg width="14" height="14" viewBox="0 0 14 14" fill="none" stroke="#555"><path d="M1.500 1.500h9l2 2v9h-11zM4 1.500v4h6v-4M3.500 12.500v-5h7v5" /></svg>
      </ToolButton>
      <ToolButton label="설정">
        <svg width="14" height="14" viewBox="0 0 14 14" fill="none" stroke="#555"><circle cx="7" cy="7" r="3.500" strokeWidth="2" /><circle cx="7" cy="7" r="5.500" strokeWidth="2" strokeDasharray="2 2.300" /></svg>
      </ToolButton>
      <label className="ml-[3px] flex items-center gap-0.5">
        <input type="checkbox" className="h-[13px] w-[13px] appearance-none border border-[#909090] bg-white" />D
      </label>
    </div>
  );
}

function Quotes() {
  const cell = "flex h-full items-center border-r border-[#a0a0a0]";
  return (
    <div className="flex h-[23px] items-start pl-1 text-[12px]">
      <div className="flex h-[20px] w-[750px] border border-[#909090] bg-[#f0f0f0] text-[#e81c0c]">
        <div className={`${cell} w-[172px] pr-0.5 pl-[22px]`}><span>13,210 ▲</span><span className="ml-auto">630</span><span className="ml-3">+5.01%</span></div>
        <div className={`${cell} w-[171px] pr-0.5 pl-2`}><span className="text-black">16,304,414</span><span className="ml-auto">117.16%</span><span className="ml-[3px] text-black">22.80%</span></div>
        <div className={`${cell} w-[82px] justify-end pr-0.5 text-black`}>222,640백만</div>
        <div className={`${cell} w-[140px] justify-between px-[3px]`}><span className="text-black">최우선</span><span>13,210</span><span>13,200</span></div>
        <div className="flex flex-1 items-center justify-between px-1">
          <span className="text-black">시</span><span>13,130</span><span className="text-black">고</span><span>14,400</span><span className="text-black">저</span><span>12,680</span>
        </div>
      </div>
      <button className="ml-0.5 h-5 w-10 border border-[#909090] bg-[#f8d0cc]">매수</button>
      <button className="ml-0.5 h-5 w-10 border border-[#909090] bg-[#c8dff5]">매도</button>
    </div>
  );
}

function TitleBar() {
  return (
    <header className="flex h-6 shrink-0 items-center bg-[#3a5693] pr-1 pl-[1px] text-[13px] text-white">
      <span className="mr-[5px] flex h-4 w-[14px] items-center justify-center rounded-sm border border-white text-[12px] font-bold">1</span>
      <div className="flex gap-[9px] whitespace-nowrap">
        {titleItems.map((t) => <span key={t}>{t}</span>)}
      </div>
      <svg className="ml-auto" width="172" height="16" viewBox="0 0 172 16" fill="none" stroke="#b4c0dc" strokeWidth="1.500">
        <path d="M5.500 2.500h8v6h-8zM1 6.500h8v6H1zM21 11.500h12M21 14h12M44 3h9v7h-9zM41.500 6v7h9" />
        <path d="M62 2h9l-1.500 2v4l2 2.500h-10L63.500 8V4zM66.500 10v5" fill="#b4c0dc" strokeWidth="1" />
        <path d="M79 3.500h9M83.500 3.500v9.500M79.500 3v3M88 3v3M81.500 13h4" strokeWidth="2" />
        <path d="M96 5.500c0-4 7-3.500 6 .5-.5 1.500-3 1.500-3 4.500M99 12v2" strokeWidth="2" />
        <path d="M114 1v14" stroke="#72759a" strokeWidth="1" /><path d="M121 12h10M142 5.500h6v5h-6zM144 5V3h6v5h-2M159 3l8 8M167 3l-8 8" />
      </svg>
    </header>
  );
}

const footerIcons: { label: string; d: string; pressed?: boolean }[] = [
  { label: "창 추가", d: "M2 2h9v5M2 2v9h4M7 7h7v7H7zM10.500 7v7M7 10.500h7" },
  { label: "창 겹치기", d: "M1 1h9v8H1zM5 5h9v8H5z" },
  { label: "추세 표시", d: "M1 2h13M1 13h13M1 10l3-3 3 3 6-6" },
  { label: "십자선", d: "M1 4h13M4 1v13M7 7l6 6M7 7v4M7 7h4", pressed: true },
  { label: "수평선", d: "M1 3h13M3 12l4-8 3 6 3 1" },
  { label: "수직선", d: "M4 1v13M4 12l4-8 3 5 3 1" },
  { label: "추세선", d: "M2 13L12 1M2 10l3 3 4-9 2 5h3" },
  { label: "모두 지우기", d: "M1 8l5-6h7l-5 6zM1 8v4h5l2-4M9 9v5M11 8v6M13 8v6" },
  { label: "차트 복사", d: "M4 1h10v7H4M1 6h9v7H1zM2 11l2-2 2 1 3-3" },
  { label: "확대경", d: "M6 1.500a4.500 4.500 0 1 0 .1 0zM9.500 10l4 4" },
  { label: "축소", d: "M2 7.500h11M2 8.500h11" },
  { label: "확대", d: "M2 7.500h11M2 8.500h11M7 2v12M8 2v12" },
];

function Footer() {
  const media = [
    ["재생", "M5 3l5 5-5 5z"], ["뒤로", "M8 3v10L3 8zM13 3v10L8 8z"], ["정지", "M4 4h8v8H4z"], ["앞으로", "M3 3l5 5-5 5zM8 3l5 5-5 5z"],
  ];
  return (
    <div className="flex h-[18px] shrink-0 items-center bg-[#f0f0f0]">
      <button aria-label="왼쪽으로" className="flex h-4 w-4 items-center justify-center border border-r-[#666] border-b-[#666] border-[#ddd] bg-[#f0f0f0]">
        <svg width="5" height="8" viewBox="0 0 5 8"><path d="M5 0v8L0 4z" /></svg>
      </button>
      <div className="flex h-full flex-1 items-center bg-[#f7f7f7]">
        <div className="h-[17px] w-[28%]" />
        <div className="h-[17px] w-[84px] border border-r-[#666] border-b-[#666] border-[#ddd] bg-[#f0f0f0]" />
      </div>
      {media.map(([label, d]) => (
        <button key={label} aria-label={label} className="mr-px flex h-4 w-4 items-center justify-center border border-r-[#555] border-b-[#555] border-[#ddd] bg-[#f0f0f0]">
          <svg width="14" height="14" viewBox="0 0 16 16"><path d={d} /></svg>
        </button>
      ))}
      <div className="relative mr-[5px] ml-[5px] h-4 w-[70px]">
        <div className="mt-1 h-[3px] border border-[#aaa] bg-[#888]" />
        <svg className="mt-[5px]" width="70" height="3"><path d="M2 0v3M9 0v3M16 0v3M23 0v3M30 0v3M38 0v3M45 0v3M52 0v3M59 0v3M67 0v3" stroke="#000" /></svg>
        <input aria-label="재생 속도" type="range" className="absolute inset-0 w-full opacity-0" />
        <i className="absolute top-0 left-[5px] h-2.5 w-1 border border-[#777] bg-[#eee]" />
      </div>
      {footerIcons.map((f) => (
        <button key={f.label} aria-label={f.label} className={`flex h-[17px] w-[17px] shrink-0 items-center justify-center ${f.pressed ? "border-t border-l border-[#888] bg-white" : ""}`}>
          <svg width="14" height="14" viewBox="0 0 15 15" fill="none" stroke="#666" strokeWidth="1.200"><path d={f.d} /></svg>
        </button>
      ))}
      <button className="w-4 text-[13px] leading-4 font-bold text-[#555]">A</button>
    </div>
  );
}

export default function App() {
  return (
    <div className="flex h-screen flex-col overflow-hidden bg-black pt-px pr-[3px] pb-[3px] pl-[3px] font-['Liberation_Sans','Noto_Sans_CJK_KR',sans-serif] leading-none">
      <TitleBar />
      <main className="flex min-h-0 flex-1 flex-col bg-[#d0d0d0]">
        <Toolbar />
        <Quotes />
        <div className="flex min-h-0 flex-1 flex-col bg-[#e3e3e3] px-[3px] pb-[2px]">
          <div className="flex min-h-0 flex-1 flex-col border border-b-0 border-[#909090] bg-white text-[11px] text-[#404040]">
            <section className="flex min-h-0 flex-1">
              <div className="relative w-[42px] shrink-0 overflow-hidden border-r border-[#909090]">
                <svg className="absolute top-[19px] left-[5px]" width="14" height="14" viewBox="0 0 14 14" fill="none" stroke="#000"><rect x=".5" y=".5" width="13" height="13" /><path d="M3 3.500h8v7H3zM3 5.500h8M3 8h8M5.500 3v8M8.500 3v8" stroke="#777" /></svg>
                {leftPrices.map(([t, y]) => <AxisLabel key={t} y={y} pane={MAIN} side="left">{t}</AxisLabel>)}
                <div className="absolute left-[3px] w-[34px] bg-[#e81c0c] pr-[3px] text-right leading-[13px] text-white" style={{ top: topPct(144, MAIN) }}>4,220</div>
                <div className="absolute left-[5px] flex w-[28px] justify-end overflow-hidden leading-[11px] text-[#e81c0c]" style={{ top: topPct(157, MAIN) }}>3.04%</div>
                <CursorTag className="left-[1px] w-[37px]" />
              </div>
              <div className="relative min-w-0 flex-1 overflow-hidden bg-[#f8f8f8]">
                <MainChart />
                <i className="absolute top-1.5 left-1 h-[5px] w-[5px] border border-[#777] bg-[#ccc]" />
                <div className="absolute top-px left-[10px] flex h-[15px] w-[156px] items-center border border-[#bbb] bg-[#ececec] px-[3px] text-[13px] whitespace-nowrap">아이씨티케이 매물대 수(13)</div>
                <span className="absolute -translate-y-1/2 text-[12px] whitespace-nowrap text-[#ff0000]" style={{ left: leftPct(1640), top: topPct(127, MAIN) }}>최고 14,300 (-0.56%, 09:28)</span>
                <span className="absolute -translate-y-1/2 text-[12px] whitespace-nowrap text-[#0000e0]" style={{ left: leftPct(74), top: topPct(840, MAIN) }}>최저 12,580 (13.04%, 15:30)</span>
                <div className="text-[12px]">
                  <Note y={304} color="#ff00e0">피봇가저항선 13,860 (10.17%)</Note>
                  <Note y={617} color="#00ff00">당일시가 13,130 (4.37%)</Note>
                  <Note y={820} color="#ff6600">(고가+저가+종가)/3 가중 28: 13,087</Note>
                  <Note y={820} color="#000">저가/저가 ↑ 24:  13,450</Note>
                  <Note y={832} color="#c0c0c0">12: 12,680</Note>
                  <Note y={832} color="#00ccff">10: 14,230</Note>
                  <Note y={843} color="#000">1000: 13,898</Note>
                  <Note y={843} color="#000">144: 13,900</Note>
                  <Note y={857} color="#ff0000">5: 14,222</Note>
                  <Note y={857} color="#993300">전일종가 12,585 (0.00%)</Note>
                  <Note y={868} color="#ccffff">30: 14,208</Note>
                  <Note y={868} color="#0000ff">10: 14,230</Note>
                </div>
              </div>
              <div className="relative w-[46px] shrink-0 overflow-hidden border-l border-[#909090]">
                <div className="absolute top-0.5 left-0 text-[12px] leading-[12px] whitespace-nowrap">
                  <div className="text-[#e81c0c]">LC:13.04</div>
                  <div className="text-[#1560c8]">HC:-0.56</div>
                </div>
                {rightScale.map(([t, y]) => <AxisLabel key={t} y={y} pane={MAIN} side="right">{t}</AxisLabel>)}
                {rightScale.map(([t, y]) => <Tick key={t} y={y + 1} pane={MAIN} side="right" />)}
                <div className="absolute left-[3px] w-[40px] bg-[#e81c0c] pl-[4px] leading-[13px] text-white" style={{ top: topPct(144, MAIN) }}>14,220</div>
                <div className="absolute left-[7px] leading-[11px] text-[#e81c0c]" style={{ top: topPct(157, MAIN) }}>13.04%</div>
                <CursorTag className="left-[2px] w-[42px]" />
              </div>
            </section>
            <section className="flex h-[158px] shrink-0 border-t border-[#909090]">
              <div className="relative w-[42px] shrink-0 overflow-hidden border-r border-[#909090] [&>span]:right-[6px]">
                {["00,000", "00,000 ", "00,000  ", "0.00"].map((t, i) => <AxisLabel key={t} y={906 + i * 36} pane={SUB} side="left">{t}</AxisLabel>)}
                {[907, 942, 978, 1014].map((y) => <Tick key={y} y={y} pane={SUB} side="left" />)}
              </div>
              <div className="relative min-w-0 flex-1 overflow-hidden bg-[#f8f8f8] text-[12px]">
                <VolumeChart />
                <Note y={926} pane={SUB} color="#339999">거래대금       60,610</Note>
                <Note y={926} pane={SUB} color="#993300">Signal 60  468,610</Note>
                <Note y={938} pane={SUB} color="#ff9900">Signal 10: 560,840</Note>
                <Note y={950} pane={SUB} color="#00ffff">Signal 12: 279,968</Note>
                <Note y={950} pane={SUB} color="#000">29,960</Note>
                <Note y={962} pane={SUB} color="#008f2c">KVO:  113,982</Note>
                <Note y={974} pane={SUB} color="#ccffff">KVO Signal: 164,074</Note>
                <Note y={974} pane={SUB} color="#0000ff">Signal:      164,074</Note>
              </div>
              <div className="relative w-[46px] shrink-0 overflow-hidden border-l border-[#909090]">
                <button aria-label="지표 닫기" className="absolute top-[3px] right-[2px] flex h-[7px] w-2 items-center justify-center bg-[#333] text-[7px] text-white">×</button>
                {volumeScale.map(([t, y]) => <AxisLabel key={t} y={y} pane={SUB} side="right">{t}</AxisLabel>)}
                {volumeScale.map(([t, y]) => <Tick key={t} y={y + 1} pane={SUB} side="right" />)}
              </div>
            </section>
            <div className="flex h-[19px] shrink-0 border-y border-[#909090]">
              <div className="w-[42px] shrink-0 border-r border-[#909090]" />
              <div className="relative min-w-0 flex-1 overflow-hidden text-[12px] leading-[15px]">
                <span className="absolute left-[2px]">15:19</span>
                {minuteLines.map((x, i) => (
                  <span key={x} className="absolute h-full border-l border-[#909090] pl-px" style={{ left: leftPct(x) }}>
                    {i === 28 ? "09:" : `09:${String(i + 1).padStart(2, "0")}`}
                  </span>
                ))}
                <span className="absolute top-0 flex h-[17px] w-[136px] items-center justify-center border border-black bg-[#ffdb70] whitespace-nowrap" style={{ left: leftPct(1200) }}>2025/03/13(목) 09:19:35</span>
              </div>
              <div className="w-[46px] shrink-0 overflow-hidden border-l border-[#909090] pl-1.5 leading-[15px] whitespace-nowrap">09:29:00</div>
            </div>
            <Footer />
          </div>
        </div>
      </main>
    </div>
  );
}
